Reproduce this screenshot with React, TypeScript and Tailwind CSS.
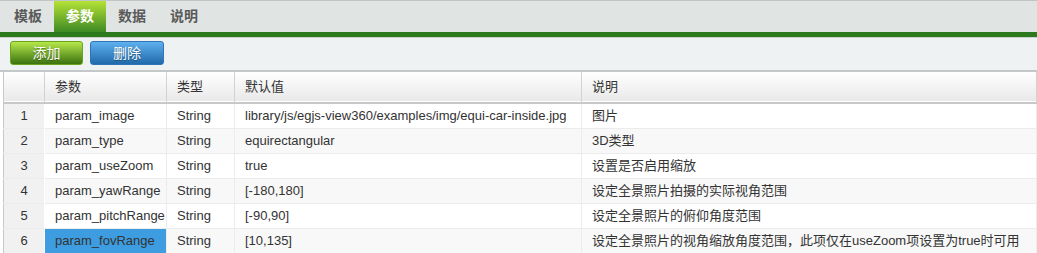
import React from "react";

const tabs = ["模板", "参数", "数据", "说明"];

const rows = [
  ["param_image", "String", "library/js/egjs-view360/examples/img/equi-car-inside.jpg", "图片"],
  ["param_type", "String", "equirectangular", "3D类型"],
  ["param_useZoom", "String", "true", "设置是否启用缩放"],
  ["param_yawRange", "String", "[-180,180]", "设定全景照片拍摄的实际视角范围"],
  ["param_pitchRange", "String", "[-90,90]", "设定全景照片的俯仰角度范围"],
  ["param_fovRange", "String", "[10,135]", "设定全景照片的视角缩放角度范围，此项仅在useZoom项设置为true时可用"],
];

const font = { fontFamily: '"Liberation Sans", Arial, "Noto Sans CJK SC", sans-serif' };

export default function App() {
  return (
    <div className="w-[1037px] h-[253px] overflow-hidden bg-white text-[13px] text-[#333]" style={font}>
      {/* tabs */}
      <div className="flex h-[32px] border-t border-[#bfc5c5] bg-[#e0e5e4] pl-[2px] text-[14px]">
        {tabs.map((t, i) => (
          <div
            key={t}
            className={
              i === 1
                ? "flex w-[52px] items-center justify-center bg-gradient-to-b from-[#b4e236] to-[#3d8a24] font-bold text-white"
                : "flex w-[52px] items-center justify-center font-bold text-[#5a5a5a]"
            }
          >
            {t}
          </div>
        ))}
      </div>
      <div className="h-[5px] bg-[#2d7a1e]" />

      {/* toolbar */}
      <div className="flex h-[35px] gap-[7px] border-t border-b-2 border-t-[#c6d2ca] border-b-[#c4c8c8] bg-[#eef2f3] pl-[10px] pt-[3px]">
        <button className="h-[24px] w-[73px] rounded-[3px] border border-[#6aa41c] bg-gradient-to-b from-[#b6e84a] to-[#3c7410] text-[14px] text-white [text-shadow:0_1px_1px_rgba(0,0,0,0.35)]">
          添加
        </button>
        <button className="h-[24px] w-[74px] rounded-[3px] border border-[#2f74b4] bg-gradient-to-b from-[#5eb0ee] to-[#1f6aab] text-[14px] text-white [text-shadow:0_1px_1px_rgba(0,0,0,0.35)]">
          删除
        </button>
      </div>

      {/* table */}
      <div className="pl-[3px]">
        <table className="w-[1034px] table-fixed border-collapse border-l border-[#c8c8c8]">
          <colgroup>
            <col className="w-[41px]" />
            <col className="w-[122px]" />
            <col className="w-[68px]" />
            <col className="w-[347px]" />
            <col />
          </colgroup>
          <thead>
            <tr className="h-[31px] border-b-2 border-[#c8c8c8] bg-gradient-to-b from-white to-[#e9e9e9]">
              {["", "参数", "类型", "默认值", "说明"].map((h, i) => (
                <th key={i} className="border-r border-[#d2d2d2] px-[10px] text-left font-normal text-[#333]">
                  {h}
                </th>
              ))}
            </tr>
          </thead>
          <tbody>
            {rows.map((r, i) => (
              <tr key={i} className={`h-[25px] border-b border-[#ececec] ${i % 2 === 1 ? "bg-[#f8f8f8]" : "bg-white"}`}>
                <td className="border-r border-white bg-[#f1f1f1] text-center">{i + 1}</td>
                {r.map((c, j) => (
                  <td
                    key={j}
                    className={`overflow-hidden whitespace-nowrap border-r border-[#ececec] px-[10px] ${
                      i === 5 && j === 0 ? "bg-[#3d9de0]" : ""
                    }`}
                  >
                    {c}
                  </td>
                ))}
              </tr>
            ))}
          </tbody>
        </table>
      </div>
    </div>
  );
}
